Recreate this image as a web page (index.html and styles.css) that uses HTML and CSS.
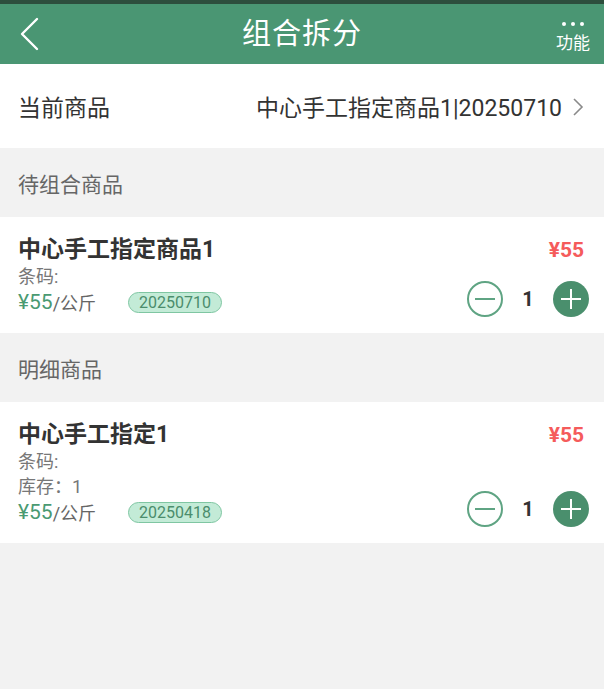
FILE: index.html
```html
<!DOCTYPE html>
<html lang="zh-CN">
<head>
    <meta charset="UTF-8">
    <meta name="viewport" content="width=device-width, initial-scale=1.0">
    <title>组合拆分</title>
    <link rel="stylesheet" href="styles.css">
</head>
<body>
    <header class="topbar">
        <div class="back">
            <svg width="20" height="34" viewBox="0 0 20 34"><path d="M18 2 L3 17 L18 32" fill="none" stroke="#fff" stroke-width="2.4" stroke-linecap="round" stroke-linejoin="round"/></svg>
        </div>
        <h1 class="title">组合拆分</h1>
        <div class="menu">
            <span class="dots"><i></i><i></i><i></i></span>
            <span class="menu-label">功能</span>
        </div>
    </header>

    <div class="current">
        <span class="current-label">当前商品</span>
        <span class="current-value">中心手工指定商品1|20250710</span>
        <svg class="arrow" width="12" height="22" viewBox="0 0 12 22"><path d="M2 3 L10 11 L2 19" fill="none" stroke="#8a8a8a" stroke-width="1.6"/></svg>
    </div>

    <div class="section">待组合商品</div>
    <div class="card">
        <div class="info">
            <div class="name">中心手工指定商品1</div>
            <div class="line">条码:</div>
            <div class="price-row">
                <span class="price">¥55</span><span class="unit">/公斤</span>
                <span class="tag">20250710</span>
            </div>
        </div>
        <div class="side">
            <div class="total">¥55</div>
            <div class="stepper">
                <span class="btn minus"></span>
                <span class="qty">1</span>
                <span class="btn plus"></span>
            </div>
        </div>
    </div>

    <div class="section">明细商品</div>
    <div class="card">
        <div class="info">
            <div class="name">中心手工指定1</div>
            <div class="line">条码:</div>
            <div class="line">库存：1</div>
            <div class="price-row">
                <span class="price">¥55</span><span class="unit">/公斤</span>
                <span class="tag">20250418</span>
            </div>
        </div>
        <div class="side">
            <div class="total">¥55</div>
            <div class="stepper">
                <span class="btn minus"></span>
                <span class="qty">1</span>
                <span class="btn plus"></span>
            </div>
        </div>
    </div>
</body>
</html>
```
FILE: styles.css
```css
body {
    margin: 0;
    padding: 0;
    font-family: Roboto, "Noto Sans CJK SC", sans-serif;
    background-color: #f2f2f2;
    color: #333;
    height: 689px;
    overflow: hidden;
}
.topbar {
    height: 60px;
    border-top: 4px solid #2d4e3d;
    background-color: #4a9673;
    display: flex;
    align-items: center;
    color: #fff;
}
.back {
    width: 62px;
    box-sizing: border-box;
    padding-left: 19px;
    display: flex;
    align-items: center;
}
.title {
    flex: 1;
    margin: 0;
    text-align: center;
    font-size: 29px;
    font-weight: normal;
    letter-spacing: 1px;
    line-height: 60px;
}
.menu {
    width: 62px;
    display: flex;
    flex-direction: column;
    align-items: center;
    padding-top: 2px;
}
.dots {
    display: flex;
    gap: 5px;
    height: 14px;
    align-items: center;
    margin-bottom: 1px;
}
.dots i {
    width: 4px;
    height: 4px;
    border-radius: 50%;
    background-color: #fff;
}
.menu-label {
    font-size: 17px;
    line-height: 22px;
}
.current {
    height: 84px;
    background-color: #fff;
    display: flex;
    align-items: center;
    padding: 0 20px 0 18px;
    font-size: 23px;
}
.current-label {
    flex: 1;
}
.current-value {
    margin-right: 10px;
}
.arrow {
    margin-top: 1px;
}
.section {
    height: 69px;
    line-height: 75px;
    overflow: hidden;
    padding-left: 18px;
    font-size: 21px;
    color: #666;
}
.card {
    background-color: #fff;
    display: flex;
    padding: 19px 15px 18px 18px;
}
.info {
    flex: 1;
}
.name {
    font-size: 23px;
    font-weight: bold;
    line-height: 28px;
    color: #333;
}
.line {
    font-size: 18px;
    line-height: 25px;
    color: #777;
}
.price-row {
    display: flex;
    align-items: center;
    height: 26px;
}
.price {
    font-size: 21px;
    color: #4a9a72;
}
.unit {
    font-size: 18px;
    color: #666;
}
.tag {
    margin-left: 32px;
    height: 19px;
    line-height: 19px;
    padding: 0 10px;
    border: 1px solid #7fc6a2;
    border-radius: 11px;
    background-color: #c3ebd7;
    color: #4b8d6c;
    font-size: 16px;
}
.side {
    display: flex;
    flex-direction: column;
    justify-content: space-between;
    align-items: flex-end;
}
.total {
    font-size: 21px;
    font-weight: bold;
    line-height: 28px;
    color: #f55b5b;
    margin-right: 5px;
}
.stepper {
    display: flex;
    align-items: center;
    margin-bottom: -2px;
}
.qty {
    width: 50px;
    text-align: center;
    font-size: 20px;
    font-weight: bold;
    color: #333;
}
.btn {
    width: 36px;
    height: 36px;
    border-radius: 50%;
    box-sizing: border-box;
    position: relative;
}
.minus {
    border: 2px solid #5fa483;
}
.plus {
    background-color: #4a8f6d;
}
.btn::before,
.btn::after {
    content: "";
    position: absolute;
    left: 50%;
    top: 50%;
    background-color: #5fa483;
}
.btn::before {
    width: 20px;
    height: 2px;
    margin: -1px 0 0 -10px;
}
.plus::before,
.plus::after {
    background-color: #fff;
}
.plus::after {
    width: 2px;
    height: 20px;
    margin: -10px 0 0 -1px;
}
```
